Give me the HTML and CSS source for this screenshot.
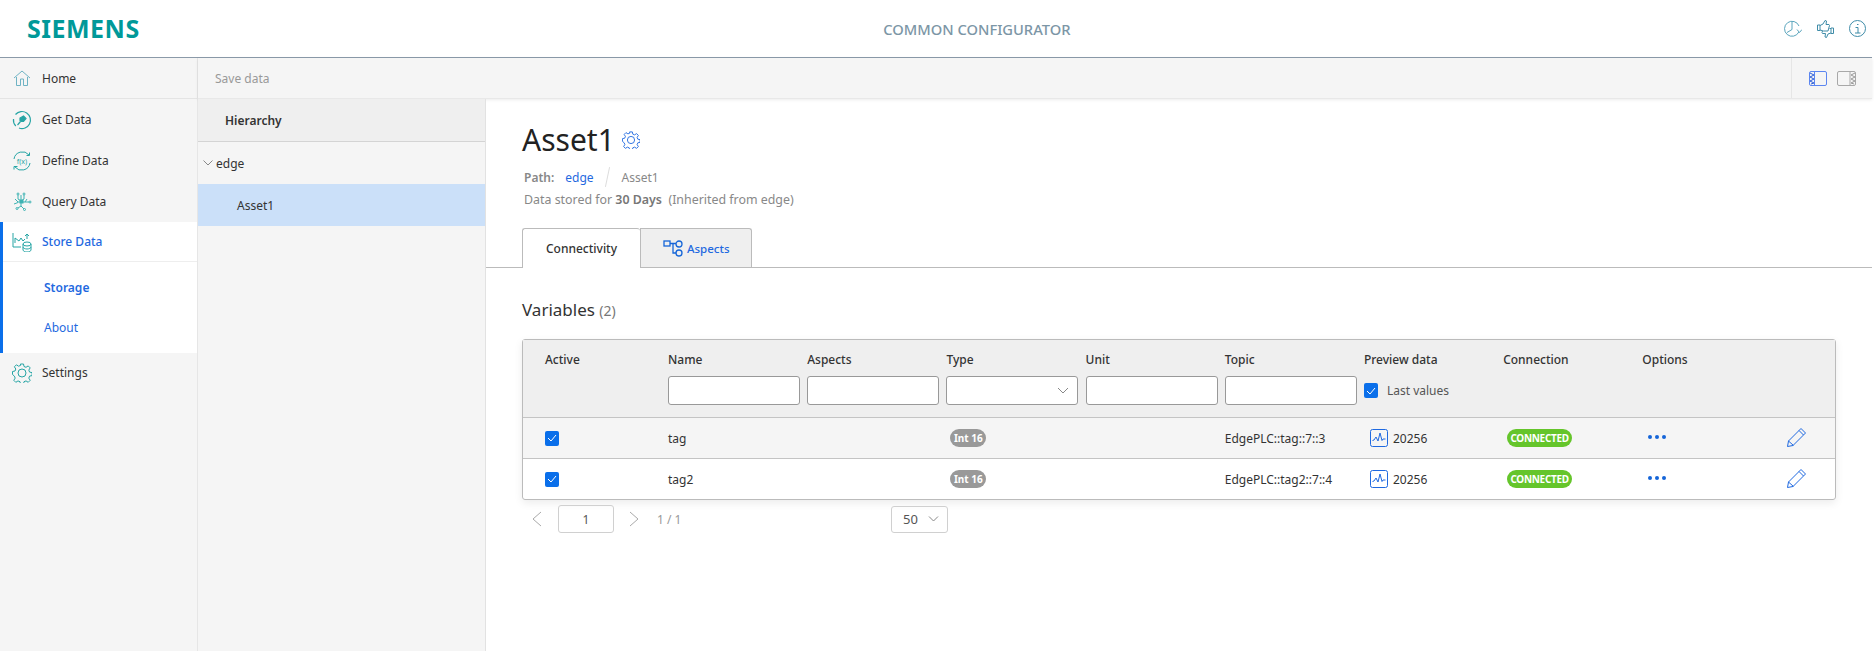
FILE: index.html
```html
<!DOCTYPE html>
<html>
	<head>
		<meta charset="utf-8" />
		<title>Common Configurator</title>
		<link rel="stylesheet" href="styles.css">
	</head>
	<body>
		<div class="header">
			<div class="logo">SIEMENS</div>
			<div class="app-title">COMMON CONFIGURATOR</div>
			<div class="header-icons">
				<svg width="18" height="18" viewBox="0 0 18 18" fill="none" stroke="#5aa5bd"><path d="M14.800 12A7.500 7.500 0 1 1 15 6"/><path d="M8 2v7.500l-5 3"/><path d="M13 9.500l2.500 3 2.500-3"/></svg>
				<svg width="17" height="18" viewBox="0 0 17 18" fill="none" stroke="#3f8ca8"><path d="M.5 5h2.500v5.500H.5z"/><path d="M3 5.500l3-1.500L8 .5l1.500.5-.5 3.500h3l.5 1-1.500 5.500H6.500L3 10"/><path d="M16.500 8H14v5.500h2.500z"/><path d="M14 8.500h-1.500M14 13l-3 1-1.500 3.500-1.500-.5.5-3.500h-3l-.5-1 .5-1.500"/></svg>
				<svg width="17" height="17" viewBox="0 0 17 17" fill="none" stroke="#3f8ca8"><circle cx="8.500" cy="8.500" r="8"/><path d="M6.500 7.500h2.500V13M6 13h5.500M8 4.500h1.500"/></svg>
			</div>
		</div>

		<div class="app">
			<div class="sidebar">
				<div class="nav-home">
					<svg class="nav-icon" width="18" height="18" viewBox="0 0 18 18" fill="none" stroke="#6fb3c4"><path d="M1 9l8-7 8 7"/><path d="M3.500 8v8.500h4V10h3v6.500h4V8"/></svg>
					<span>Home</span>
				</div>
				<div class="nav-item">
					<svg class="nav-icon" width="20" height="20" viewBox="0 0 20 20" fill="none" stroke="#27a5a5" stroke-width="1.200"><path d="M3.500 4.500A8.500 8.500 0 1 1 7 18M3.800 16A8.500 8.500 0 0 1 1.500 9"/><path d="M11.500 6l2.500 2.500-2.500 3H9l-1-1V8z" fill="#27a5a5"/><path d="M8.500 11.500L5.500 15"/></svg>
					<span>Get Data</span>
				</div>
				<div class="nav-item">
					<svg class="nav-icon" width="20" height="20" viewBox="0 0 20 20" fill="none" stroke="#27a5a5"><path d="M2 8a8.500 8.500 0 0 1 15-4M18 12a8.500 8.500 0 0 1-15 4"/><path d="M14.500 4.500h3V1.500M2 18.500v-3h3.500"/><text x="10" y="12.500" class="fx-text">f(x)</text></svg>
					<span>Define Data</span>
				</div>
				<div class="nav-item">
					<svg class="nav-icon" width="20" height="20" viewBox="0 0 20 20" fill="none" stroke="#3db3b3"><path d="M9 3v6M6 3v4l3 2M12 3v4l-3 2M3 7l3 3h3M2 12l4-1.500M9 11v3l3 3M9 14l-3 2M10 10h7M13 10l2-3"/><rect x="8" y="8" width="3" height="3" fill="#3db3b3"/><circle cx="18" cy="10" r="1"/><circle cx="6" cy="2" r="1"/><circle cx="12" cy="2" r="1"/><circle cx="12.500" cy="17.500" r="1"/><circle cx="5" cy="16.500" r="1"/></svg>
					<span>Query Data</span>
				</div>
				<div class="nav-group">
					<div class="nav-item active">
						<svg class="nav-icon" width="20" height="20" viewBox="0 0 20 20" fill="none" stroke="#27a5a5"><path d="M1 1v14h8"/><path d="M3 11V6l4 3 2-3 2 3 2-2"/><path d="M15 7V2M13 4l2-2 2 2"/><ellipse cx="15" cy="12" rx="4" ry="2"/><path d="M11 12v6c0 1 2 2 4 2s4-1 4-2v-6M11 15c0 1 2 2 4 2s4-1 4-2"/></svg>
						<span>Store Data</span>
					</div>
					<div class="sub-item current">Storage</div>
					<div class="sub-item">About</div>
				</div>
				<div class="nav-item nav-settings">
					<svg class="nav-icon" width="20" height="20" viewBox="0 0 20 20" fill="none" stroke="#27a5a5"><use href="#gear"/></svg>
					<span>Settings</span>
				</div>
			</div>

			<div class="content">
				<div class="topbar">
					<span class="save">Save data</span>
					<div class="panel-toggle">
						<svg width="18" height="15" viewBox="0 0 18 15" fill="none"><rect x="0.500" y="0.500" width="17" height="14" rx="1.500" stroke="#5c86f0"/><path d="M5.500 1v13" stroke="#5c86f0"/><path d="M1 2l4 2-4 2 4 2-4 2 4 2-3 1" stroke="#2f5fd8"/></svg>
						<svg width="19" height="15" viewBox="0 0 19 15" fill="none"><rect x="0.500" y="0.500" width="18" height="14" rx="1.500" stroke="#a8a8a8"/><path d="M13 1v13" stroke="#a8a8a8"/><path d="M18 2l-4 2 4 2-4 2 4 2-4 2 3 1" stroke="#999"/></svg>
					</div>
				</div>

				<div class="split">
					<div class="tree">
						<div class="tree-head">Hierarchy</div>
						<div class="tree-node">
							<svg width="10" height="6" viewBox="0 0 10 6" fill="none" stroke="#888"><path d="M0.500 0.500L5 5l4.500-4.500"/></svg>
							<span>edge</span>
						</div>
						<div class="tree-leaf">Asset1</div>
					</div>

					<div class="detail">
						<div class="asset-title">
							<h1>Asset1</h1>
							<svg width="18" height="18" viewBox="0 0 20 20" fill="none" stroke="#1f69e0"><use href="#gear"/></svg>
						</div>
						<div class="path">
							<b>Path:</b>
							<a>edge</a>
							<i class="slash"></i>
							<span>Asset1</span>
						</div>
						<div class="stored">Data stored for <b>30 Days</b> &nbsp;(Inherited from edge)</div>

						<div class="tabs">
							<div class="tab selected">Connectivity</div>
							<div class="tab">
								<svg width="20" height="18" viewBox="0 0 20 18" fill="none" stroke="#1565d8" stroke-width="1.300"><rect x="1" y="2" width="6" height="5"/><circle cx="16" cy="5" r="3"/><circle cx="16" cy="14" r="3"/><path d="M7 4.500h6M10 4.500V14h3"/></svg>
								<span class="tab-label">Aspects</span>
							</div>
						</div>

						<h2 class="var-title">Variables <span>(2)</span></h2>

						<div class="table">
							<div class="row head">
								<div class="cell">Active</div>
								<div class="cell">Name<input class="filter" type="text"></div>
								<div class="cell">Aspects<input class="filter" type="text"></div>
								<div class="cell">Type
									<div class="filter select"><svg width="12" height="7" viewBox="0 0 12 7" fill="none" stroke="#888"><path d="M1 1l5 5 5-5"/></svg></div>
								</div>
								<div class="cell">Unit<input class="filter" type="text"></div>
								<div class="cell">Topic<input class="filter" type="text"></div>
								<div class="cell">Preview data
									<label class="last"><i class="check"><svg width="10" height="8" viewBox="0 0 10 8" fill="none" stroke="#fff"><path d="M1 4l3 3 5-6"/></svg></i>Last values</label>
								</div>
								<div class="cell">Connection</div>
								<div class="cell">Options</div>
							</div>

							<div class="row data odd">
								<div class="cell"><i class="check"><svg width="10" height="8" viewBox="0 0 10 8" fill="none" stroke="#fff"><path d="M1 4l3 3 5-6"/></svg></i></div>
								<div class="cell">tag</div>
								<div class="cell"></div>
								<div class="cell"><span class="pill grey">Int 16</span></div>
								<div class="cell"></div>
								<div class="cell">EdgePLC::tag::7::3</div>
								<div class="cell preview"><svg width="18" height="18" viewBox="0 0 18 18" fill="none" stroke="#1f69e0"><rect x="0.500" y="0.500" width="17" height="17" rx="2"/><path d="M2.500 11.500L4 11l2-3 2 4 2-8 2 7.500 1-1.500h2.500"/></svg>20256</div>
								<div class="cell"><span class="pill green">CONNECTED</span></div>
								<div class="cell dots"><i></i><i></i><i></i></div>
								<svg class="edit" width="19" height="19" viewBox="0 0 19 19" fill="none" stroke="#1f69e0"><path d="M.5 18.500l1-5.500L14 .5l4.500 4.500L6 17.500zM1.500 13l5 4.500M12 2.500l4.500 4.500"/></svg>
							</div>
							<div class="row data">
								<div class="cell"><i class="check"><svg width="10" height="8" viewBox="0 0 10 8" fill="none" stroke="#fff"><path d="M1 4l3 3 5-6"/></svg></i></div>
								<div class="cell">tag2</div>
								<div class="cell"></div>
								<div class="cell"><span class="pill grey">Int 16</span></div>
								<div class="cell"></div>
								<div class="cell">EdgePLC::tag2::7::4</div>
								<div class="cell preview"><svg width="18" height="18" viewBox="0 0 18 18" fill="none" stroke="#1f69e0"><rect x="0.500" y="0.500" width="17" height="17" rx="2"/><path d="M2.500 11.500L4 11l2-3 2 4 2-8 2 7.500 1-1.500h2.500"/></svg>20256</div>
								<div class="cell"><span class="pill green">CONNECTED</span></div>
								<div class="cell dots"><i></i><i></i><i></i></div>
								<svg class="edit" width="19" height="19" viewBox="0 0 19 19" fill="none" stroke="#1f69e0"><path d="M.5 18.500l1-5.500L14 .5l4.500 4.500L6 17.500zM1.500 13l5 4.500M12 2.500l4.500 4.500"/></svg>
							</div>
						</div>

						<div class="pager">
							<svg width="11" height="16" viewBox="0 0 11 16" fill="none" stroke="#aaa"><path d="M10 1L2 8l8 7"/></svg>
							<div class="page-box">1</div>
							<svg width="11" height="16" viewBox="0 0 11 16" fill="none" stroke="#aaa"><path d="M1 1l8 7-8 7"/></svg>
							<span class="page-count">1 / 1</span>
							<div class="page-size">50<svg width="11" height="6" viewBox="0 0 11 6" fill="none" stroke="#888"><path d="M1 0.500l4.500 4.500L10 0.500"/></svg></div>
						</div>
					</div>
				</div>
			</div>
		</div>

		<svg class="defs" width="0" height="0">
			<symbol id="gear" viewBox="0 0 20 20">
				<circle cx="10" cy="10" r="4"/>
				<path d="M8.500 1h3l.5 2.500 2 .8 2.200-1.400 2 2-1.400 2.200.8 2 2.500.5v3l-2.500.5-.8 2 1.400 2.200-2 2-2.200-1.400-2 .8-.5 2.500h-3l-.5-2.500-2-.8-2.200 1.400-2-2 1.400-2.200-.8-2L.500 11.500v-3L3 8l.8-2-1.400-2.200 2-2 2.200 1.400 2-.8z"/>
			</symbol>
		</svg>
	</body>
</html>
```

FILE: styles.css
```css
*{
	padding: 0;
	margin: 0;
	box-sizing: border-box;
}
html,body{
	height: 100%;
	width: 100%;
	overflow: hidden;
}
body{
	font-family: "Noto Sans", "Liberation Sans", sans-serif;
	font-size: 12px;
	color: #333;
	background-color: #fff;
	padding-right: 2px;
}
.defs{
	display: block;
	height: 0;
}
.header{
	height: 58px;
	border-bottom: 1px solid #8b9aa9;
	display: flex;
	align-items: center;
	justify-content: space-between;
	padding: 0 6px 0 27px;
}
.logo{
	color: #009999;
	font-size: 25px;
	font-weight: 700;
	letter-spacing: 0.5px;
	margin-top: -2px;
}
.app-title{
	flex: 1;
	text-align: center;
	color: #7c96a6;
	font-size: 14.7px;
	font-weight: 500;
	margin-left: 30px;
}
.header-icons{
	display: flex;
	gap: 15px;
}
.app{
	display: flex;
	height: 593px;
}
.sidebar{
	width: 198px;
	background-color: #f5f5f5;
	border-right: 1px solid #e6e6e6;
	flex-shrink: 0;
}
.nav-home,.nav-item{
	height: 41px;
	display: flex;
	align-items: center;
	padding-left: 12px;
	gap: 10px;
	color: #333;
}
.nav-home{
	border-bottom: 1px solid #e4e4e4;
	padding-left: 13px;
}
.nav-icon{
	flex-shrink: 0;
}
.nav-home .nav-icon{
	margin-right: 1px;
}
.fx-text{
	font-size: 7px;
	fill: #27a5a5;
	stroke: none;
	text-anchor: middle;
}
.nav-group{
	background-color: #fff;
	border-left: 3px solid #0a6fea;
	padding-bottom: 6px;
}
.nav-group .nav-item{
	height: 40px;
	padding-left: 9px;
	border-bottom: 1px solid #eee;
	color: #1f69e0;
	font-weight: 500;
}
.sub-item{
	height: 40px;
	display: flex;
	align-items: center;
	padding-left: 41px;
	color: #1f69e0;
}
.sub-item.current{
	font-weight: 600;
	margin-top: 5px;
}
.nav-settings{
	margin-top: -1px;
}
.content{
	flex: 1;
	min-width: 0;
	display: flex;
	flex-direction: column;
}
.topbar{
	height: 41px;
	background-color: #f5f5f5;
	border-bottom: 1px solid #e8e8e8;
	display: flex;
	align-items: center;
	justify-content: space-between;
	padding-left: 17px;
	box-shadow: 0 1px 3px rgba(0,0,0,.08);
	flex-shrink: 0;
}
.save{
	color: #999;
}
.panel-toggle{
	width: 81px;
	height: 100%;
	border-left: 1px solid #e6e6e6;
	display: flex;
	align-items: center;
	gap: 10px;
	padding-left: 17px;
}
.split{
	flex: 1;
	display: flex;
	min-height: 0;
}
.tree{
	width: 288px;
	background-color: #f5f5f5;
	border-right: 1px solid #e2e2e2;
	flex-shrink: 0;
}
.tree-head{
	height: 43px;
	background-color: #efefef;
	border-bottom: 1px solid #d4d4d4;
	display: flex;
	align-items: center;
	padding-left: 27px;
	font-weight: 600;
}
.tree-node{
	height: 42px;
	display: flex;
	align-items: center;
	gap: 3px;
	padding-left: 5px;
}
.tree-leaf{
	height: 42px;
	background-color: #cbe0f9;
	display: flex;
	align-items: center;
	padding-left: 39px;
}
.detail{
	flex: 1;
	min-width: 0;
	padding: 0 36px 0 36px;
}
.asset-title{
	display: flex;
	align-items: center;
	gap: 7px;
	margin-top: 22px;
	height: 38px;
}
.asset-title h1{
	font-size: 30px;
	font-weight: 400;
	color: #222;
	line-height: 38px;
}
.path{
	display: flex;
	align-items: center;
	height: 20px;
	margin-top: 8px;
	padding-left: 2px;
	color: #888;
}
.path b{
	font-weight: 600;
	margin-right: 11px;
}
.path a{
	color: #1f69e0;
}
.slash{
	width: 1px;
	height: 20px;
	background-color: #ddd;
	transform: rotate(12deg);
	margin: 0 14px 0 13px;
}
.stored{
	height: 20px;
	margin-top: 3px;
	padding-left: 2px;
	color: #888;
	line-height: 20px;
	font-size: 12.4px;
}
.stored b{
	font-weight: 600;
	color: #777;
}
.tabs{
	display: flex;
	margin: 18px -36px 0 -36px;
	padding-left: 36px;
	border-bottom: 1px solid #bbb;
	height: 40px;
}
.tab{
	height: 39px;
	padding: 0 21px 0 22px;
	display: flex;
	align-items: center;
	gap: 4px;
	background-color: #efefef;
	border: 1px solid #bbb;
	border-bottom: none;
	border-radius: 3px 3px 0 0;
	color: #1f69e0;
	font-weight: 500;
}
.tab-label{
	font-size: 11.5px;
}
.tab.selected{
	background-color: #fff;
	color: #333;
	width: 118px;
	height: 40px;
	padding: 0;
	justify-content: center;
	border-right: none;
}
.tab.selected + .tab{
	border-radius: 0 3px 0 0;
}
.var-title{
	font-size: 17px;
	font-weight: 400;
	color: #333;
	margin-top: 29px;
	line-height: 26px;
}
.var-title span{
	font-size: 14px;
	color: #777;
}
.table{
	margin-top: 15px;
	border: 1px solid #bbb;
	border-radius: 3px;
	box-shadow: 0 3px 8px rgba(0,0,0,.08);
}
.row{
	display: grid;
	grid-template-columns: 123px repeat(8, 139.2px);
	padding-left: 22px;
	position: relative;
}
.row.head{
	height: 77px;
	background-color: #efefef;
	font-weight: 500;
	color: #333;
	padding-top: 11px;
}
.row.data{
	height: 41px;
	border-top: 1px solid #c4c4c4;
	align-items: center;
}
.row.odd{
	background-color: #f5f5f5;
}
.filter{
	display: block;
	width: 132px;
	height: 29px;
	border: 1px solid #999;
	border-radius: 3px;
	background-color: #fff;
	margin-top: 8px;
	outline: none;
}
.select{
	display: flex;
	align-items: center;
	justify-content: flex-end;
	padding-right: 8px;
}
.last{
	display: flex;
	align-items: center;
	gap: 9px;
	margin-top: 8px;
	height: 29px;
	font-weight: 400;
	color: #555;
}
.check{
	display: flex;
	align-items: center;
	justify-content: center;
	width: 14px;
	height: 15px;
	border-radius: 2px;
	background-color: #0a6fea;
}
.pill{
	display: inline-block;
	height: 18px;
	line-height: 18px;
	border-radius: 9px;
	color: #fff;
	font-size: 10px;
	font-weight: 700;
	text-align: center;
	margin-left: 4px;
}
.grey{
	background-color: #999;
	width: 36px;
}
.green{
	background-color: #65c52b;
	width: 65px;
	letter-spacing: -0.3px;
}
.preview{
	display: flex;
	align-items: center;
	gap: 5px;
	padding-left: 6px;
}
.dots{
	display: flex;
	gap: 3px;
	padding-left: 6px;
	margin-top: -2px;
}
.dots i{
	width: 4px;
	height: 4px;
	border-radius: 50%;
	background-color: #1565d8;
}
.edit{
	position: absolute;
	right: 29px;
	top: 10px;
}
.pager{
	display: flex;
	align-items: center;
	height: 28px;
	margin-top: 5px;
	padding-left: 9px;
	color: #555;
}
.page-box{
	width: 56px;
	height: 28px;
	margin: 0 15px 0 16px;
	border: 1px solid #d0d0d0;
	border-radius: 3px;
	display: flex;
	align-items: center;
	justify-content: center;
}
.page-count{
	color: #999;
	margin-left: 11px;
	width: 240px;
	padding-left: 6px;
}
.page-size{
	width: 57px;
	height: 27px;
	border: 1px solid #d0d0d0;
	border-radius: 3px;
	display: flex;
	align-items: center;
	justify-content: space-between;
	padding: 0 8px 0 11px;
	font-size: 13px;
}
```
